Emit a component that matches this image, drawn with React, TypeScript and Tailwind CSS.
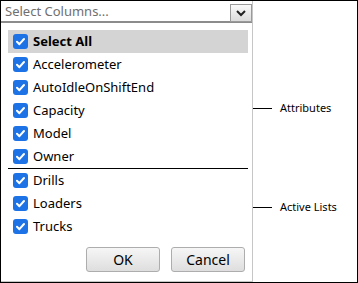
import React from "react";

const items = ["Accelerometer", "AutoIdleOnShiftEnd", "Capacity", "Model", "Owner"];
const lists = ["Drills", "Loaders", "Trucks"];

const Check = () => (
  <span className="flex h-[15px] w-[15px] shrink-0 items-center justify-center rounded-[3px] bg-[#1d72e6]">
    <svg width="11" height="11" viewBox="0 0 11 11" fill="none">
      <path d="M2 5.8 L4.4 8.2 L9 3" stroke="white" strokeWidth="2" strokeLinecap="round" strokeLinejoin="round" />
    </svg>
  </span>
);

const Row = ({ label, bold }: { label: string; bold?: boolean }) => (
  <div
    className={`flex h-[23px] items-center gap-[5px] px-[5px] ${bold ? "h-[22px] bg-[#d4d4d4] font-bold" : ""}`}
  >
    <Check />
    <span className="text-[13px] leading-none text-black">{label}</span>
  </div>
);

const Btn = ({ children }: { children: React.ReactNode }) => (
  <button className="flex h-[25px] w-[74px] items-center justify-center rounded-[3px] border border-[#adadad] bg-gradient-to-b from-[#f6f6f6] to-[#dedede] text-[14px] text-black">
    {children}
  </button>
);

export default function App() {
  return (
    <div
      className="flex h-[283px] w-[358px] border border-black bg-white"
      style={{ fontFamily: '"Noto Sans", "Open Sans", sans-serif' }}
    >
      <div className="flex w-[252px] flex-col border-r border-b border-[#c6c6c6]">
        <div className="flex h-[22px] items-center justify-between border-b-2 border-[#8c8c8c] pl-[4px]">
          <span className="text-[13px] leading-none text-[#6f6f6f]">Select Columns...</span>
          <span className="mt-[3px] flex h-[18px] w-[22px] items-center justify-center border border-[#9a9a9a] bg-gradient-to-b from-[#fafafa] to-[#dcdcdc]">
            <svg width="12" height="8" viewBox="0 0 12 8" fill="none">
              <path d="M2 2 L6 6 L10 2" stroke="#222" strokeWidth="2" />
            </svg>
          </span>
        </div>
        <div className="ml-[7px] mr-[4px] mt-[7px] flex flex-col">
          <Row label="Select All" bold />
          {items.map((l) => (
            <Row key={l} label={l} />
          ))}
          <div className="h-px bg-black" />
          {lists.map((l) => (
            <Row key={l} label={l} />
          ))}
        </div>
        <div className="mt-[9px] flex justify-end gap-[11px] pr-[7px]">
          <Btn>OK</Btn>
          <Btn>Cancel</Btn>
        </div>
      </div>
      <div className="flex flex-1 flex-col text-[11px] text-black">
        <div className="mt-[99px] flex h-[16px] items-center">
          <span className="h-px w-[19px] bg-black" />
          <span className="ml-[8px]">Attributes</span>
        </div>
        <div className="mt-[83px] flex h-[16px] items-center">
          <span className="h-px w-[19px] bg-black" />
          <span className="ml-[8px]">Active Lists</span>
        </div>
      </div>
    </div>
  );
}
